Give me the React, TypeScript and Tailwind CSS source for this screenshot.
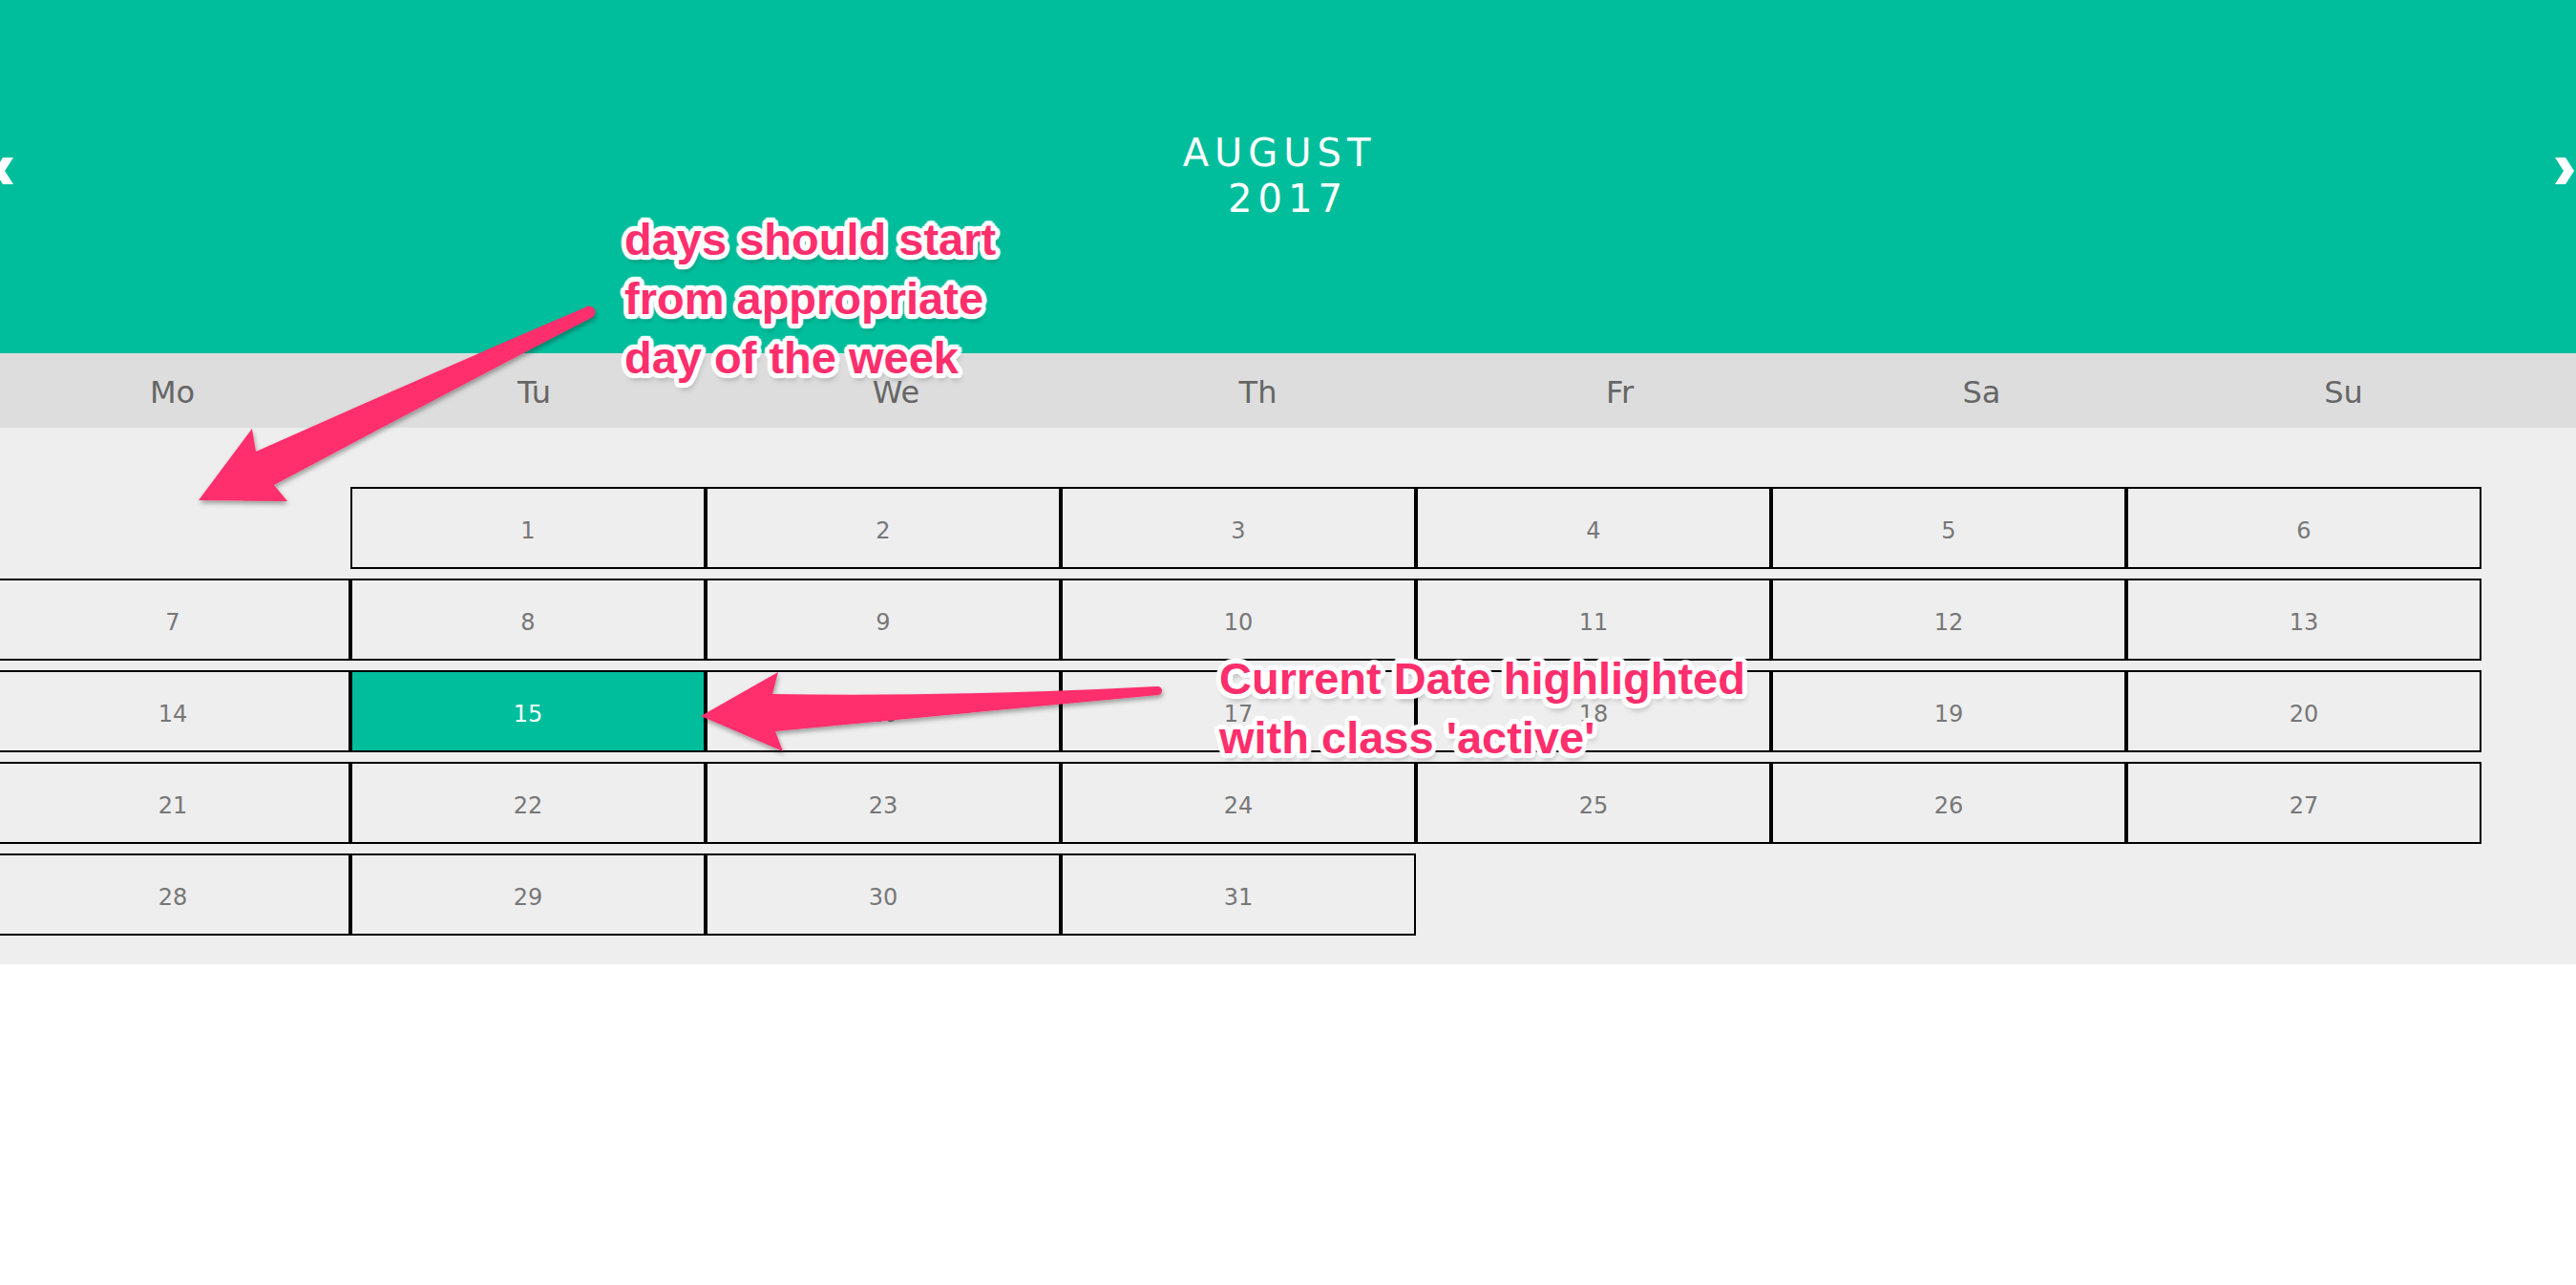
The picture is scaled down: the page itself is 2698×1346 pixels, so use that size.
import React from 'react';

const cells: (number | null)[] = [null, ...Array.from({ length: 31 }, (_, i) => i + 1)];
const weekdays = ['Mo', 'Tu', 'We', 'Th', 'Fr', 'Sa', 'Su'];
const today = 15;

const outline =
  '[text-shadow:5px_0_1px_#fff,-5px_0_1px_#fff,0_5px_1px_#fff,0_-5px_1px_#fff,3.5px_3.5px_1px_#fff,-3.5px_3.5px_1px_#fff,3.5px_-3.5px_1px_#fff,-3.5px_-3.5px_1px_#fff,4.6px_1.9px_1px_#fff,-4.6px_1.9px_1px_#fff,4.6px_-1.9px_1px_#fff,-4.6px_-1.9px_1px_#fff,1.9px_4.6px_1px_#fff,-1.9px_4.6px_1px_#fff,1.9px_-4.6px_1px_#fff,-1.9px_-4.6px_1px_#fff,2px_6px_6px_rgba(0,0,0,0.35)]';

function Chevron({ dir }: { dir: 'left' | 'right' }) {
  return (
    <svg width="20" height="28" viewBox="0 0 20 28" className="block">
      {dir === 'right' ? (
        <polygon points="0,0 11,0 20,14 11,28 0,28 9,14" fill="#fff" />
      ) : (
        <polygon points="20,0 9,0 0,14 9,28 20,28 11,14" fill="#fff" />
      )}
    </svg>
  );
}

export default function App() {
  return (
    <div className="relative w-full h-[1346px] bg-white overflow-hidden font-['DejaVu_Sans',Verdana,sans-serif]">
      {/* Month header */}
      <div className="grid grid-cols-[1fr_auto_1fr] h-[370px] bg-[#00be9c]">
        <div className="justify-self-start mt-[165px] -ml-[6px]">
          <Chevron dir="left" />
        </div>
        <div className="pt-[136px] text-white text-[40px] leading-[48px] tracking-[6px] text-center">
          <div className="pr-[18px]">AUGUST</div>
          <div>2017</div>
        </div>
        <div className="justify-self-end mt-[165px] mr-[2px]">
          <Chevron dir="right" />
        </div>
      </div>

      {/* Weekday bar */}
      <div className="h-[78px] bg-[#dddddd] pt-[22px]">
        <div className="grid grid-cols-[repeat(7,367px)] gap-x-[12px] -ml-[3px]">
          {weekdays.map((d) => (
            <div key={d} className="text-center text-[32px] leading-[38px] text-[#666666]">
              {d}
            </div>
          ))}
        </div>
      </div>

      {/* Days */}
      <div className="bg-[#eeeeee] pt-[62px] pb-[30px]">
        <div className="grid grid-cols-[repeat(7,372px)] gap-y-[10px] -ml-[5px]">
          {cells.map((n, i) =>
            n === null ? (
              <div key={i} className="h-[86px]" />
            ) : (
              <div
                key={i}
                className={
                  n === today
                    ? 'h-[86px] box-border border-2 border-black bg-[#00be9c] text-white pt-[30px] text-center text-[24px] leading-[28px]'
                    : 'h-[86px] box-border border-2 border-black text-[#777777] pt-[30px] text-center text-[24px] leading-[28px]'
                }
              >
                {n}
              </div>
            )
          )}
        </div>
      </div>

      {/* Annotation arrows */}
      <svg width="2698" height="1346" className="absolute left-0 top-0 pointer-events-none">
        <defs>
          <filter id="shadow" x="-10%" y="-10%" width="130%" height="130%">
            <feDropShadow dx="1" dy="3" stdDeviation="2.5" floodColor="#000" floodOpacity="0.35" />
          </filter>
        </defs>
        <path
          d="M 613,322 Q 440,396 268,473 L 264,449 L 208,524 L 301,525 L 287,508 Q 455,418 621,332 A 5 5 0 0 0 613 322 Z"
          fill="#ff2e6c"
          filter="url(#shadow)"
        />
        <path
          d="M 1212,719 Q 1000,730 809,727 L 815,704 L 734,750 L 820,787 L 812,766 L 1213,728 A 4.5 4.5 0 0 0 1212 719 Z"
          fill="#ff2e6c"
          filter="url(#shadow)"
        />
      </svg>

      {/* Annotation texts */}
      <div
        className={`absolute left-[654px] top-[220px] font-['Liberation_Sans',Arial,sans-serif] font-bold text-[47px] leading-[62px] text-[#ff2e6c] ${outline}`}
      >
        <div>days should start</div>
        <div>from appropriate</div>
        <div>day of the week</div>
      </div>
      <div
        className={`absolute left-[1277px] top-[680px] font-['Liberation_Sans',Arial,sans-serif] font-bold text-[47px] leading-[62px] text-[#ff2e6c] ${outline}`}
      >
        <div>Current Date highlighted</div>
        <div>with class 'active'</div>
      </div>
    </div>
  );
}
